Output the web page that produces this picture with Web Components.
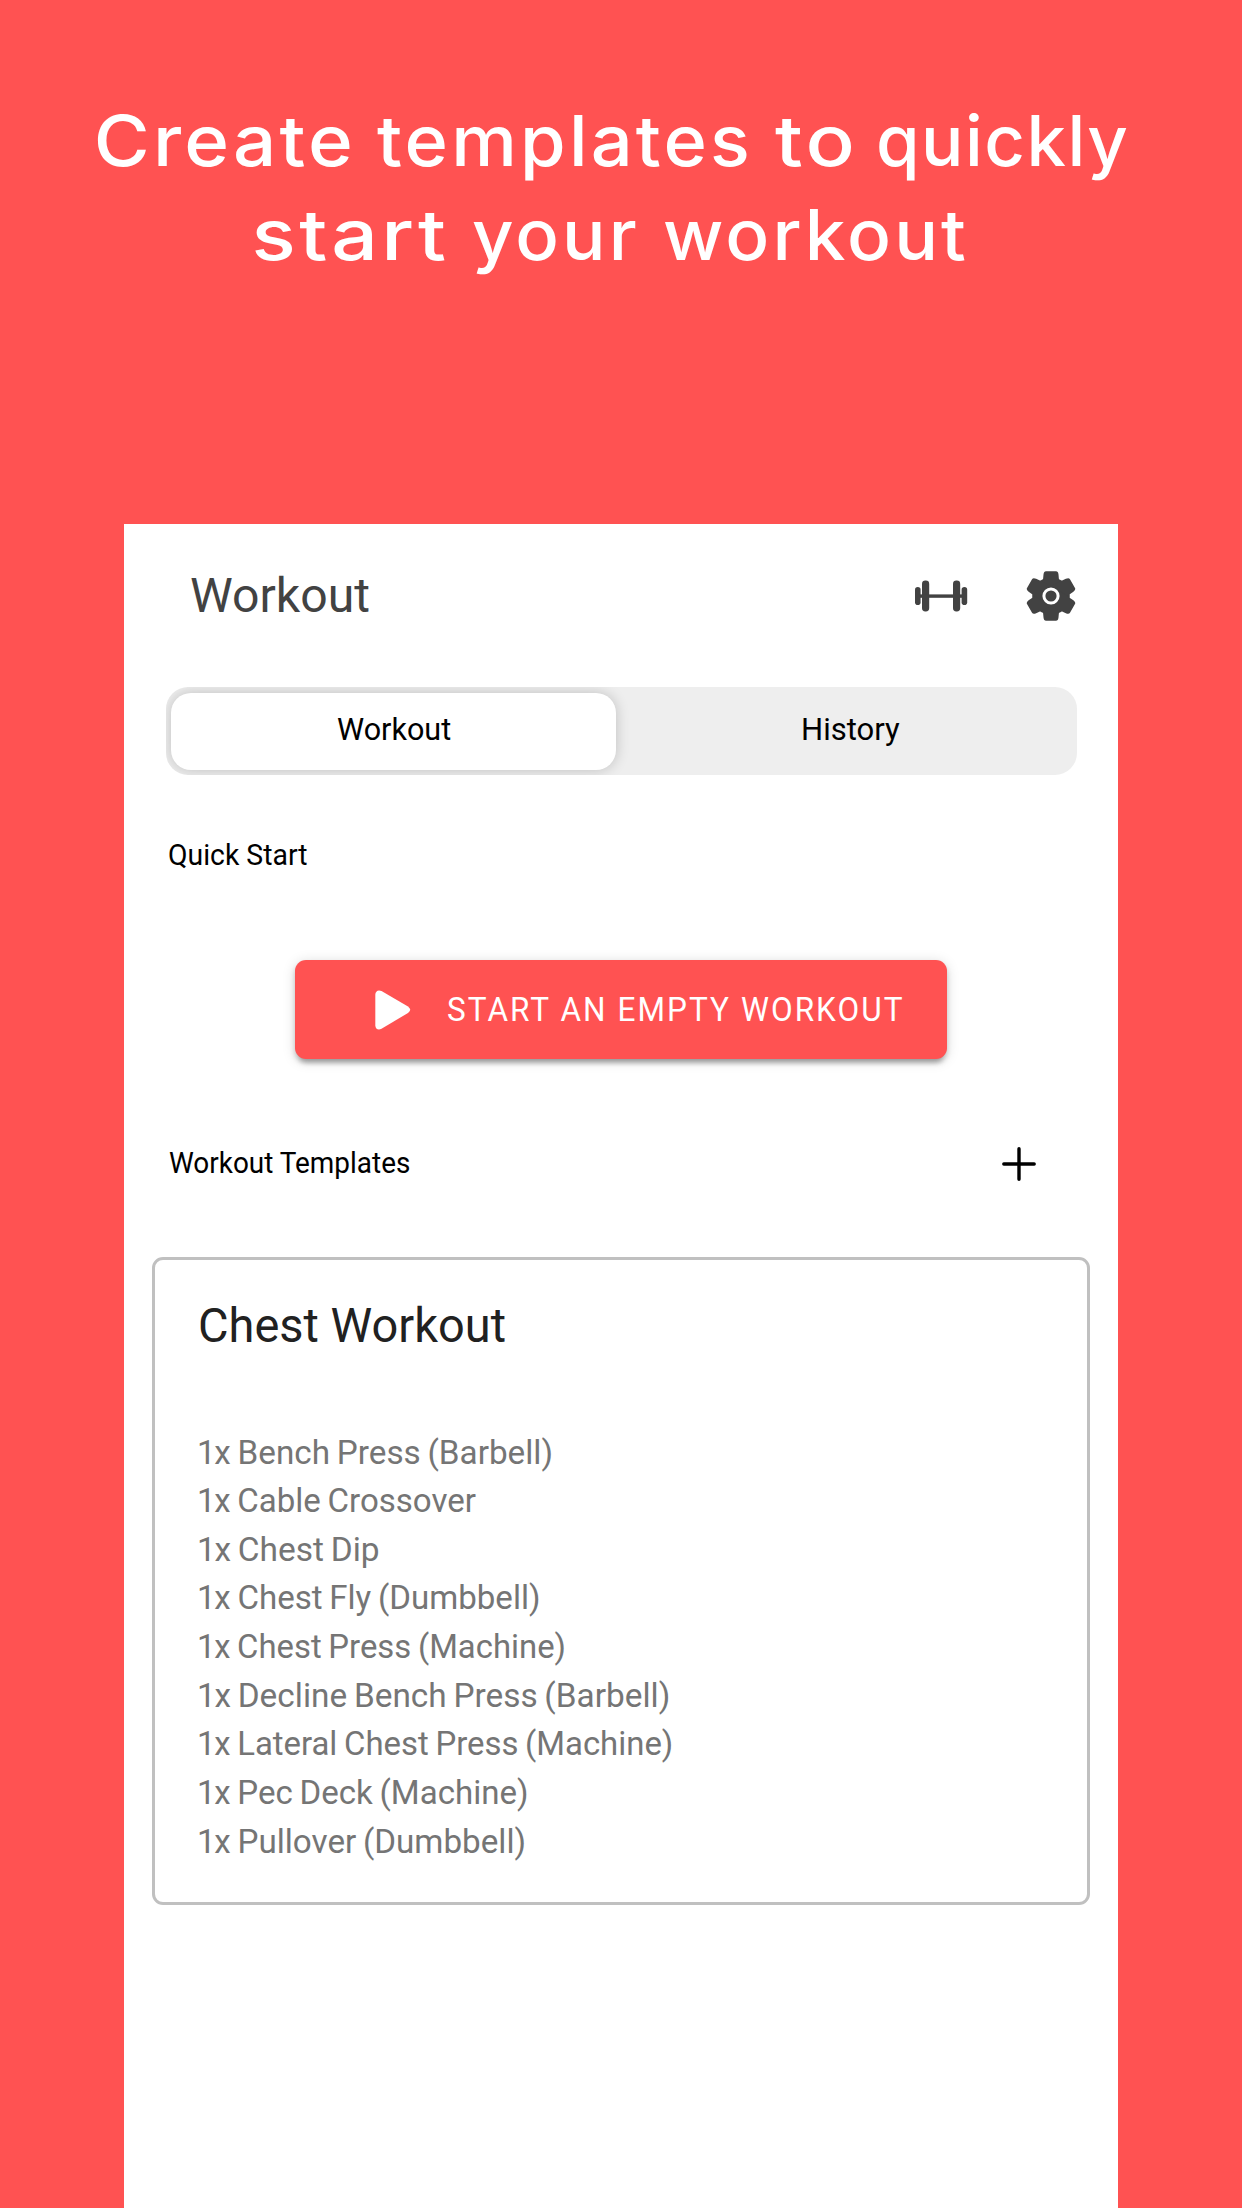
<!DOCTYPE html>
<html lang="en">
<head>
<meta charset="utf-8">
<title>Workout templates</title>
<style>
  html, body { margin: 0; padding: 0; background: #ff5252; }
  body { width: 1242px; height: 2208px; overflow: hidden; font-family: Roboto, "Liberation Sans", sans-serif; }
</style>
</head>
<body>
<promo-page></promo-page>
<script>
  const define = (name, html, setup) => {
    const template = document.createElement('template');
    template.innerHTML = html;
    customElements.define(name, class extends HTMLElement {
      connectedCallback() {
        if (this.shadowRoot) return;
        this.attachShadow({ mode: 'open' }).append(template.content.cloneNode(true));
        if (setup) setup(this, this.shadowRoot);
      }
    });
  };

  // One line of text whose ink spans exactly the requested width.
  // "tight" is the width that a slotted, tightened lead-in saves.
  const pen = document.createElement('canvas').getContext('2d');
  define('fit-text', `
    <style>
      :host { display: block; flex: none; white-space: nowrap; }
      span { display: inline-block; transform-origin: 0 50%; }
    </style>
    <span><slot></slot></span>`, (el, root) => {
    const size = +el.getAttribute('size'), target = +el.getAttribute('fit');
    const line = +(el.getAttribute('line') || Math.round(size * 1.2));
    const css = getComputedStyle(el);
    const letter = el.getAttribute('letter') || '0', word = el.getAttribute('word') || '0';
    pen.font = `${css.fontWeight} ${size}px ${css.fontFamily}`;
    pen.letterSpacing = letter + 'px';
    pen.wordSpacing = word + 'px';
    const m = pen.measureText(el.textContent);
    const ink = m.actualBoundingBoxRight + m.actualBoundingBoxLeft - (+el.getAttribute('tight') || 0);
    const k = target / ink;
    el.style.cssText += `;width:${target}px;height:${line}px;font-size:${size}px;line-height:${line}px;letter-spacing:${letter}px;word-spacing:${word}px`;
    root.querySelector('span').style.transform = `translateX(${m.actualBoundingBoxLeft * k}px) scaleX(${k})`;
  });

  define('promo-title', `
    <style>
      :host { display: flex; flex-direction: column; padding-top: 93.5px; color: #fff;
              font-family: Inter, "Noto Sans", sans-serif; font-weight: 500; }
      div { display: flex; gap: 28px; }
      .one { margin-left: 96.5px; } .two { margin-left: 255px; }
    </style>
    <div class="one">
      <fit-text size="70" line="94" letter="3" fit="252.5">Create</fit-text>
      <fit-text size="70" line="94" letter="3" fit="370">templates</fit-text>
      <fit-text size="70" line="94" letter="3" fit="76">to</fit-text>
      <fit-text size="70" line="94" letter="1.5" fit="247.5">quickly</fit-text>
    </div>
    <div class="two">
      <fit-text size="70" line="94" letter="3" fit="190">start</fit-text>
      <fit-text size="70" line="94" letter="3" fit="162.5">your</fit-text>
      <fit-text size="70" line="94" letter="3" fit="301">workout</fit-text>
    </div>`);

  define('icon-dumbbell', `
    <style>:host, svg { display: block; }</style>
    <svg width="54" height="34" viewBox="0 0 54 34" fill="#424242">
      <rect x="1" y="8" width="5.6" height="18" rx="2.8"/><rect x="8" y="1.5" width="7.2" height="31" rx="3.4"/>
      <rect x="4" y="15.4" width="46" height="3.4"/>
      <rect x="39" y="1.5" width="7.2" height="31" rx="3.4"/><rect x="47.6" y="8" width="5.6" height="18" rx="2.8"/>
    </svg>`);

  define('icon-gear', `
    <style>:host, svg { display: block; }</style>
    <svg width="50" height="50" viewBox="-25 -25 50 50">
      <g fill="#424242">
        <circle r="18.8"/>
        <g id="t"><path d="M-8.2-14Q-7.9-17-7.5-21.5Q-7.1-24.8-5-24.8H5Q7.1-24.8 7.5-21.5Q7.9-17 8.2-14L9 0H-9Z"/>
        <path transform="rotate(180)" d="M-8.2-14Q-7.9-17-7.5-21.5Q-7.1-24.8-5-24.8H5Q7.1-24.8 7.5-21.5Q7.9-17 8.2-14L9 0H-9Z"/></g>
        <use href="#t" transform="rotate(60)"/><use href="#t" transform="rotate(120)"/>
      </g>
      <circle r="7.1" fill="none" stroke="#fff" stroke-width="3"/>
    </svg>`);

  define('app-bar', `
    <style>
      :host { display: flex; align-items: center; height: 143px; padding: 0 41.6px 0 66.7px; color: #424242; box-sizing: border-box; }
      fit-text { margin-right: auto; padding-top: 1px; }
      icon-gear { margin-left: 58.3px; }
    </style>
    <fit-text size="47.4" fit="177.5">Workout</fit-text>
    <icon-dumbbell></icon-dumbbell><icon-gear></icon-gear>`);

  define('segment-control', `
    <style>
      :host { display: flex; box-sizing: border-box; width: 911px; height: 88px; margin: 20px 0 0 41.5px; padding: 5.5px;
              background: #eee; border-radius: 22px; overflow: hidden; color: #000; }
      div { flex: none; display: flex; align-items: center; justify-content: center; box-sizing: border-box; padding: 0 0 3px 1px; }
      .on { width: 445px; background: #fff; border-radius: 20px; box-shadow: 0 0 14px rgba(0,0,0,.2); }
      .off { width: 470px; }
    </style>
    <div class="on"><fit-text size="31" fit="114">Workout</fit-text></div>
    <div class="off"><fit-text size="31" fit="97">History</fit-text></div>`);

  define('section-row', `
    <style>
      :host { display: flex; align-items: center; justify-content: space-between; box-sizing: border-box; height: 60px; padding: 0 80px 0 44.5px; color: #000; }
    </style>
    <slot></slot>`);

  define('icon-plus', `
    <style>:host, svg { display: block; }</style>
    <svg width="38" height="38" viewBox="-19 -19 38 38" stroke="#000" stroke-width="3.4" stroke-linecap="round"><path d="M-15.2 0H15.2M0-15.2V15.2"/></svg>`);

  define('start-button', `
    <style>
      :host { display: flex; align-items: center; box-sizing: border-box; width: 652px; height: 99px; margin-left: 171.3px; padding-left: 79.7px;
              background: #ff5252; color: #fff; border-radius: 11px;
              box-shadow: 0 8px 5px -5px rgba(0,0,0,.2), 0 4px 5px rgba(0,0,0,.18), 0 2px 13px rgba(0,0,0,.15); }
      svg { display: block; margin-right: 37.5px; }
    </style>
    <svg width="36" height="40" viewBox="0 0 36 40"><path fill="#fff" d="M.3 4.8C.3 1 3.4-.7 6.5 1.1L33 16.5Q37.4 19.8 33 23L6.5 38.7C3.4 40.5.3 39 .3 35.2Z"/></svg>
    <fit-text size="33.7" letter="2.2" fit="455">START AN EMPTY WORKOUT</fit-text>`);

  define('template-card', `
    <style>
      :host { display: block; box-sizing: border-box; width: 938px; height: 648px; margin-left: 28px; border: 3px solid #c0c0c0; border-radius: 11px; padding: 37.5px 0 0 45px; }
      .name { color: #212121; margin-bottom: 74px; }
      ul { list-style: none; margin: 0; padding: 0; color: #757575; }
      li { height: 48.65px; margin-left: -1px; }
      .count { letter-spacing: -4px; }
    </style>
    <fit-text class="name" size="47.4" line="57" fit="304.5">Chest Workout</fit-text>
    <ul></ul>`, (el, root) => {
    const rows = [
      ['Bench Press (Barbell)', 352.5], ['Cable Crossover', 276.7], ['Chest Dip', 179],
      ['Chest Fly (Dumbbell)', 340], ['Chest Press (Machine)', 365.5], ['Decline Bench Press (Barbell)', 469.8],
      ['Lateral Chest Press (Machine)', 472.8], ['Pec Deck (Machine)', 328], ['Pullover (Dumbbell)', 325.5]];
    root.querySelector('ul').innerHTML = rows.map(([text, width]) =>
      `<li><fit-text size="33" line="48" word="-1.5" tight="8" fit="${width}"><span class="count">1 </span>x ${text}</fit-text></li>`).join('');
  });

  define('promo-page', `
    <style>
      :host { display: block; width: 1242px; height: 2208px; overflow: hidden; }
      promo-title { box-sizing: border-box; height: 524px; }
      main { width: 994px; height: 1684px; margin-left: 124px; background: #fff; overflow: hidden; }
      .quick { margin-top: 50px; }
      start-button { margin-top: 75px; }
      .templates { margin-top: 75px; }
      .templates fit-text { padding-bottom: 2px; }
      template-card { margin-top: 63px; }
    </style>
    <promo-title></promo-title>
    <main>
      <app-bar></app-bar>
      <segment-control></segment-control>
      <section-row class="quick"><fit-text size="29" fit="138">Quick Start</fit-text></section-row>
      <start-button></start-button>
      <section-row class="templates"><fit-text size="29" fit="241">Workout Templates</fit-text><icon-plus></icon-plus></section-row>
      <template-card></template-card>
    </main>`);
</script>
</body>
</html>
